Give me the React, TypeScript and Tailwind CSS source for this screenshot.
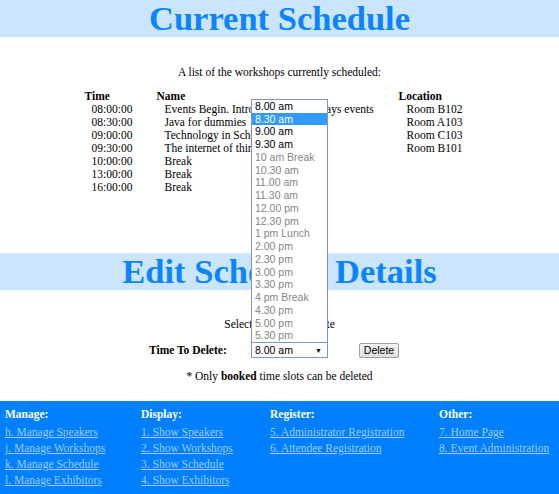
const schedule = [
  { time: '08:00:00', name: 'Events Begin. Introduction to the days events', location: 'Room B102' },
  { time: '08:30:00', name: 'Java for dummies', location: 'Room A103' },
  { time: '09:00:00', name: 'Technology in Schools', location: 'Room C103' },
  { time: '09:30:00', name: 'The internet of things', location: 'Room B101' },
  { time: '10:00:00', name: 'Break', location: '' },
  { time: '13:00:00', name: 'Break', location: '' },
  { time: '16:00:00', name: 'Break', location: '' },
];

const slots = [
  { label: '8.00 am', enabled: true },
  { label: '8.30 am', enabled: true, active: true },
  { label: '9.00 am', enabled: true },
  { label: '9.30 am', enabled: true },
  { label: '10 am Break' },
  { label: '10.30 am' },
  { label: '11.00 am' },
  { label: '11.30 am' },
  { label: '12.00 pm' },
  { label: '12.30 pm' },
  { label: '1 pm Lunch' },
  { label: '2.00 pm' },
  { label: '2.30 pm' },
  { label: '3.00 pm' },
  { label: '3.30 pm' },
  { label: '4 pm Break' },
  { label: '4.30 pm' },
  { label: '5.00 pm' },
  { label: '5.30 pm' },
];

const footer = [
  {
    title: 'Manage:',
    links: ['h. Manage Speakers', 'j. Manage Workshops', 'k. Manage Schedule', 'l. Manage Exhibitors'],
  },
  {
    title: 'Display:',
    links: ['1. Show Speakers', '2. Show Workshops', '3. Show Schedule', '4. Show Exhibitors'],
  },
  { title: 'Register:', links: ['5. Administrator Registration', '6. Attendee Registration'] },
  { title: 'Other:', links: ['7. Home Page', '8. Event Administration'] },
];

function Band({ title }: { title: string }) {
  return (
    <div className="flex h-[37px] items-center justify-center bg-[#cce5ff]">
      <h1 className="text-[34.5px] font-bold leading-none text-[#0a84ff]">{title}</h1>
    </div>
  );
}

function TimeSelect() {
  return (
    <div className="relative">
      {/* open list of the native select */}
      <div className="absolute bottom-full left-0 z-10 mb-[-1px] w-[77px] border border-[#7a96c6] bg-white font-['Liberation_Sans',sans-serif] text-[10.5px]">
        {slots.map((s) => (
          <div
            key={s.label}
            className={
              s.active
                ? 'h-[12.75px] bg-[#3399ff] pl-[3px] leading-[12.75px] text-white'
                : s.enabled
                  ? 'h-[12.75px] pl-[3px] leading-[12.75px] text-black'
                  : 'h-[12.75px] pl-[3px] leading-[12.75px] text-[#858585]'
            }
          >
            {s.label}
          </div>
        ))}
      </div>
      <div className="flex h-[16px] w-[77px] items-center justify-between border border-[#7a96c6] bg-white pl-[3px] pr-[5px] font-['Liberation_Sans',sans-serif] text-[10.5px] text-black">
        <span>8.00 am</span>
        <span className="text-[7px]">▼</span>
      </div>
    </div>
  );
}

export default function App() {
  return (
    <div className="min-h-[494px] bg-white font-['Liberation_Serif',serif] text-[11.5px] leading-[13px] text-black">
      <Band title="Current Schedule" />
      <p className="mt-[29px] text-center">A list of the workshops currently scheduled:</p>

      <table className="mx-auto mt-[11px] w-[390px] border-collapse">
        <thead>
          <tr className="h-[13px]">
            <th className="w-[72px] p-0 text-left font-bold">Time</th>
            <th className="w-[242px] p-0 text-left font-bold">Name</th>
            <th className="p-0 text-left font-bold">Location</th>
          </tr>
        </thead>
        <tbody>
          {schedule.map((r) => (
            <tr key={r.time} className="h-[13px]">
              <td className="p-0 pl-[7px]">{r.time}</td>
              <td className="whitespace-nowrap p-0 pl-[8px]">{r.name}</td>
              <td className="p-0 pl-[8px]">{r.location}</td>
            </tr>
          ))}
        </tbody>
      </table>

      <div className="mt-[59px]">
        <Band title="Edit Schedule Details" />
      </div>

      <p className="mt-[28px] text-center">Select the time to delete</p>

      <div className="mt-[11px] flex h-[16px] items-center pl-[149px]">
        <span className="w-[102px] font-bold">Time To Delete:</span>
        <TimeSelect />
        <button className="ml-[31px] h-[15px] w-[40px] rounded-[2px] border border-[#a0a0a0] bg-gradient-to-b from-[#f6f6f6] to-[#dedede] font-['Liberation_Sans',sans-serif] text-[10.5px] leading-none text-black">
          Delete
        </button>
      </div>

      <p className="mt-[12px] text-center">
        * Only <b>booked</b> time slots can be deleted
      </p>

      <footer className="mt-[18px] grid grid-cols-[136px_129px_169px_1fr] bg-[#007fff] pb-[8px] pl-[5px] pt-[5px] leading-[16px]">
        {footer.map((col) => (
          <div key={col.title}>
            <div className="mb-[2px] font-bold text-white">{col.title}</div>
            {col.links.map((l) => (
              <a key={l} href="#" className="block w-fit whitespace-nowrap text-[#9cccff] underline">
                {l}
              </a>
            ))}
          </div>
        ))}
      </footer>
    </div>
  );
}
